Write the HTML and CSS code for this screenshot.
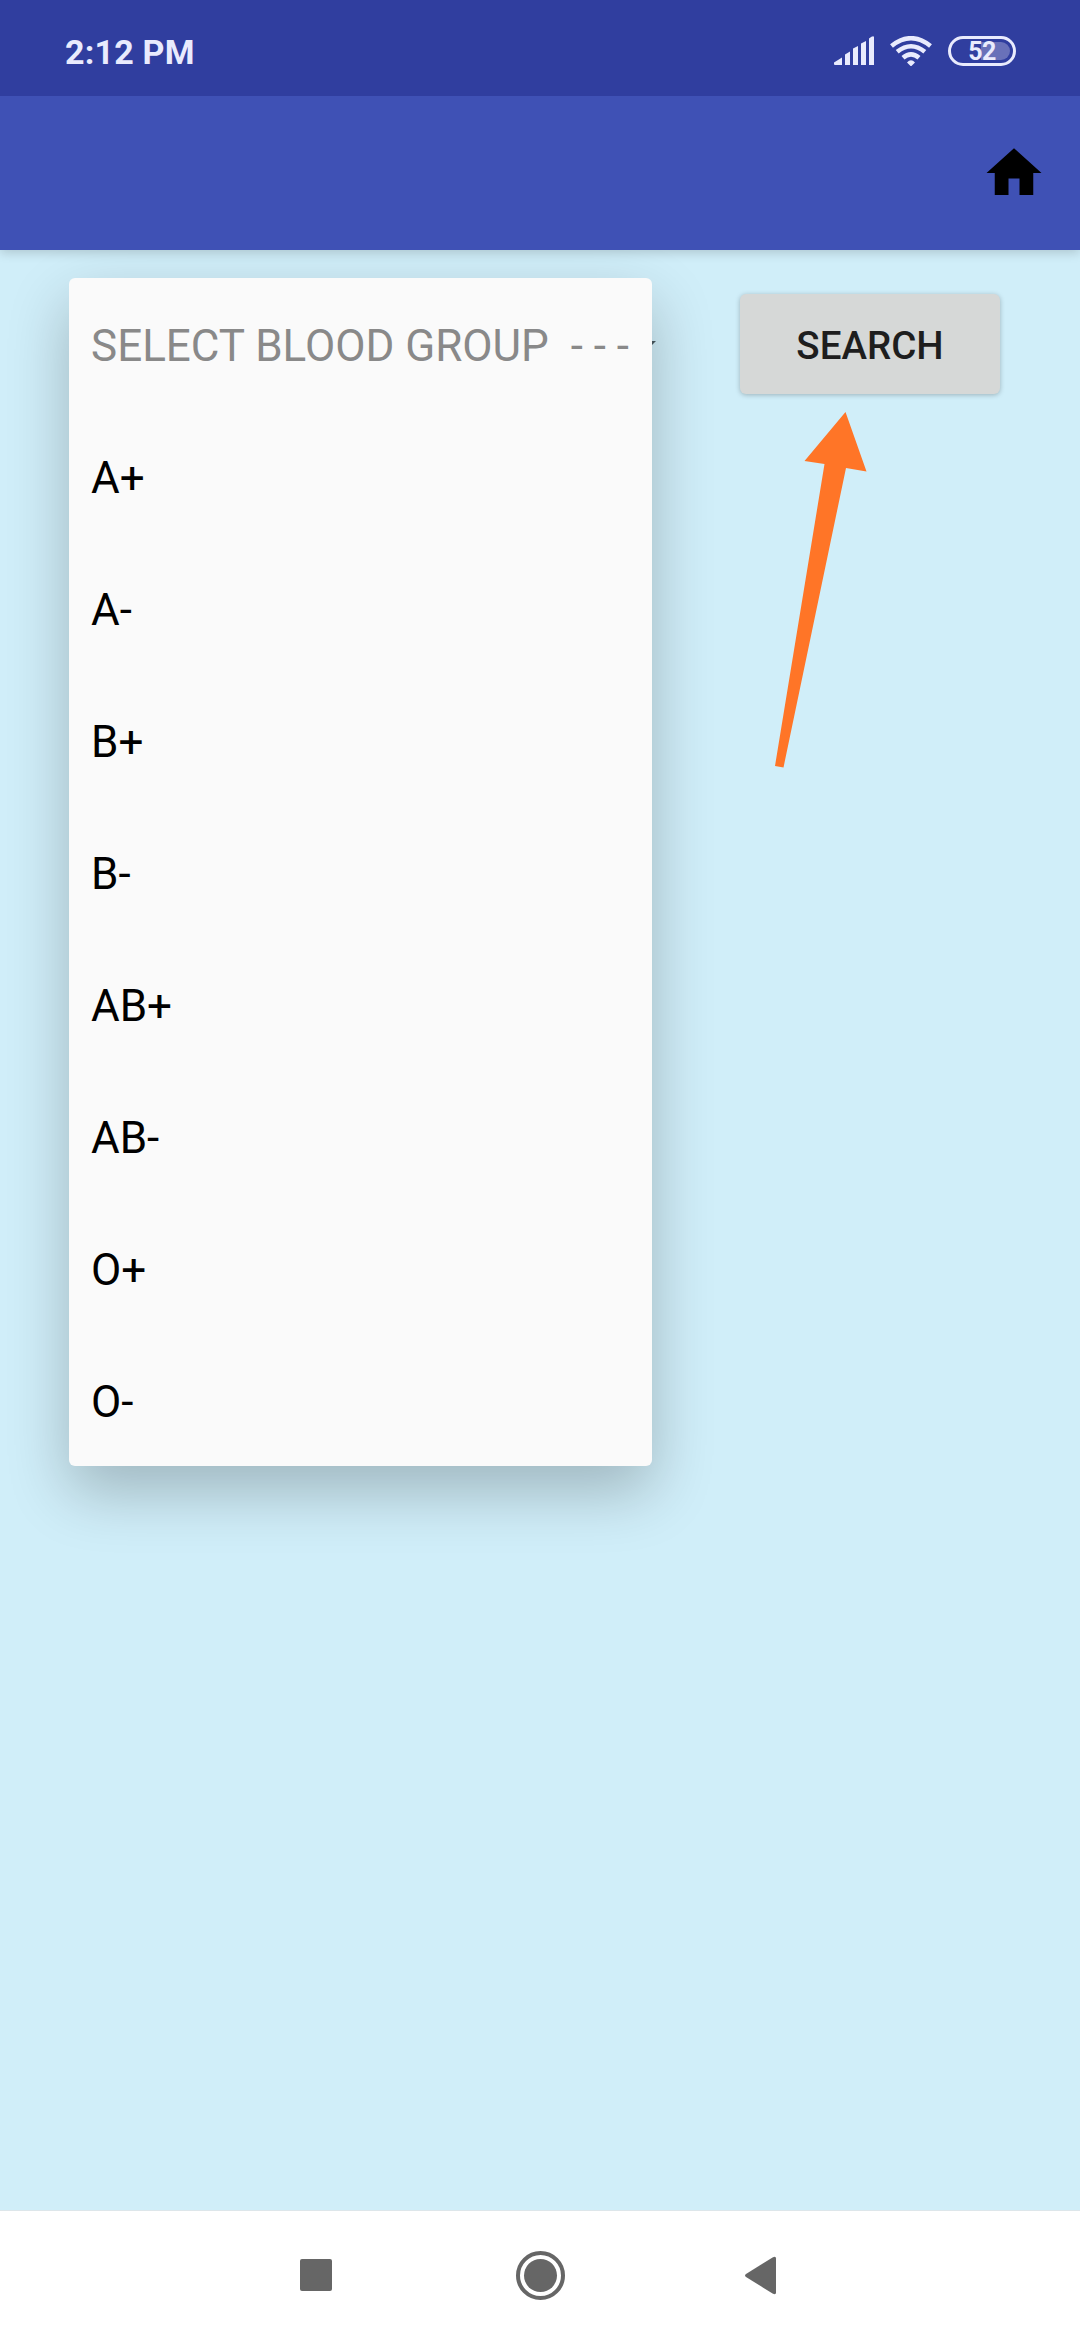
FILE: index.html
```html
<!DOCTYPE html>
<html lang="en">
<head>
<meta charset="utf-8">
<title>Blood group search</title>
<link rel="stylesheet" href="styles.css">
</head>
<body>
<div class="screen">
  <header class="status-bar">
    <span class="clock">2:12 PM</span>
    <div class="status-icons">
      <svg class="signal" viewBox="0 0 40 30" width="40" height="30"><path d="M0 26.500 8 21.500V29H1Q0 29 0 28ZM11 18.500 16 15.500V29H11ZM19 12.500 24 10V29H19ZM27 7.500 32 5V29H27ZM35 2.500Q39.500-1 40 1V29H35Z"/></svg>
      <svg class="wifi" viewBox="0 0 42 30" width="42" height="30"><g class="waves"><path d="M1.500 10Q21-5.500 40.500 10"/><path d="M7.200 15.800Q21 4.700 34.800 15.800"/><path d="M13 21.800Q21 15 29 21.800"/></g><path class="dot" d="M17 26.500Q21 22 25 26.500L21.700 29.700Q21 30.400 20.300 29.700Z"/></svg>
      <div class="battery"><span class="charge"></span><span class="level">52</span></div>
    </div>
  </header>
  <nav class="app-bar">
    <svg class="home" viewBox="0 0 24 24" width="66" height="66"><path d="M10 20v-6h4v6h5v-8h3L12 3 2 12h3v8z"/></svg>
  </nav>
  <main class="content">
    <div class="spinner">
      <svg class="caret" viewBox="0 0 28 14" width="28" height="14"><path d="M0 0H28L14 14Z"/></svg>
      <ul class="dropdown">
        <li class="option hint">SELECT BLOOD GROUP  - - -</li>
        <li class="option">A+</li>
        <li class="option">A-</li>
        <li class="option">B+</li>
        <li class="option">B-</li>
        <li class="option">AB+</li>
        <li class="option">AB-</li>
        <li class="option">O+</li>
        <li class="option">O-</li>
      </ul>
    </div>
    <div class="action">
      <button class="search">SEARCH</button>
      <svg class="pointer" viewBox="0 0 92 356" width="92" height="356"><path d="M70.500 0 91.500 59.500 71 56 8.500 355.500 0 354 49.500 52 29.500 49Z"/></svg>
    </div>
  </main>
  <footer class="nav-bar">
    <svg viewBox="0 0 50 50" width="50" height="50"><rect x="9" y="8" width="32" height="32" rx="2"/></svg>
    <svg viewBox="0 0 50 50" width="50" height="50"><circle class="ring" cx="25.500" cy="24.500" r="22.500"/><circle cx="25.500" cy="24.500" r="16.500"/></svg>
    <svg viewBox="0 0 50 50" width="50" height="50"><path d="M7 23 34 6.300Q37 5 37 7.500V41.500Q37 44 34 42.700L7 26Q5 24.500 7 23Z"/></svg>
  </footer>
</div>
</body>
</html>
```
FILE: styles.css
```css
* { box-sizing: border-box; }
body { margin: 0; font-family: Roboto, "Liberation Sans", sans-serif; }
svg { display: block; flex: none; }
.screen { display: flex; flex-direction: column; width: 1080px; height: 2340px; overflow: hidden; background: #d0eef9; }

.status-bar { position: relative; z-index: 2; flex: none; display: flex; justify-content: space-between; height: 96px; padding: 0 64px 0 65px; background: #303e9f; }
.clock { padding-top: 32px; font-size: 34px; line-height: 40px; font-weight: 700; letter-spacing: .2px; color: #e9ebfd; }
.status-icons { display: flex; align-items: flex-start; padding-top: 36px; }
.signal { fill: #e9ebfd; }
.wifi { margin-left: 16px; }
.waves { fill: none; stroke: #e9ebfd; stroke-width: 4.6; }
.dot { fill: #e9ebfd; }
.battery { display: flex; align-items: center; justify-content: center; position: relative; width: 68px; height: 30px; margin-left: 16px; border: 3px solid #e9ebfd; border-radius: 15px; }
.charge { position: absolute; top: 3px; right: 3px; width: 29px; height: 18px; border-radius: 0 9px 9px 0; background: #6971b9; }
.level { position: relative; padding-top: 1px; font-size: 25px; line-height: 24px; font-weight: 700; letter-spacing: -.6px; color: #e9ebfd; }

.app-bar { position: relative; z-index: 1; flex: none; display: flex; justify-content: flex-end; height: 154px; padding: 44px 33px 0 0; background: #3f51b5; box-shadow: 0 3px 10px rgba(0, 0, 0, .16); }

.content { flex: 1; display: flex; align-items: flex-start; padding: 28px 0 0 69px; }
.spinner { position: relative; width: 583px; }
.caret { position: absolute; left: 559px; top: 63px; fill: #485860; }
.dropdown { position: relative; margin: 0; padding: 0; list-style: none; border-radius: 6px; background: #fafafa; box-shadow: 0 25px 62px rgba(0, 0, 0, .24); }
.option { display: flex; align-items: center; height: 132px; padding: 4px 0 0 22px; font-size: 44px; line-height: 52px; white-space: pre; color: #000; }
.hint { color: #898989; }

.action { padding: 16px 0 0 88px; }
.search { display: block; width: 260px; height: 100px; padding: 3px 0 0; border: 0; border-radius: 6px; background: #d6d8d7; box-shadow: 0 1px 5px rgba(0, 0, 0, .25); font: 500 38.5px/46px Roboto, "Liberation Sans", sans-serif; color: #1e1e1e; }
.pointer { margin: 18px 0 0 35px; fill: #ff7527; }

.nav-bar { flex: none; display: flex; justify-content: center; gap: 174px; height: 130px; padding-top: 40px; border-top: 1px solid #dde6ea; background: #fff; fill: #666; }
.ring { fill: none; stroke: #666; stroke-width: 4; }
```
